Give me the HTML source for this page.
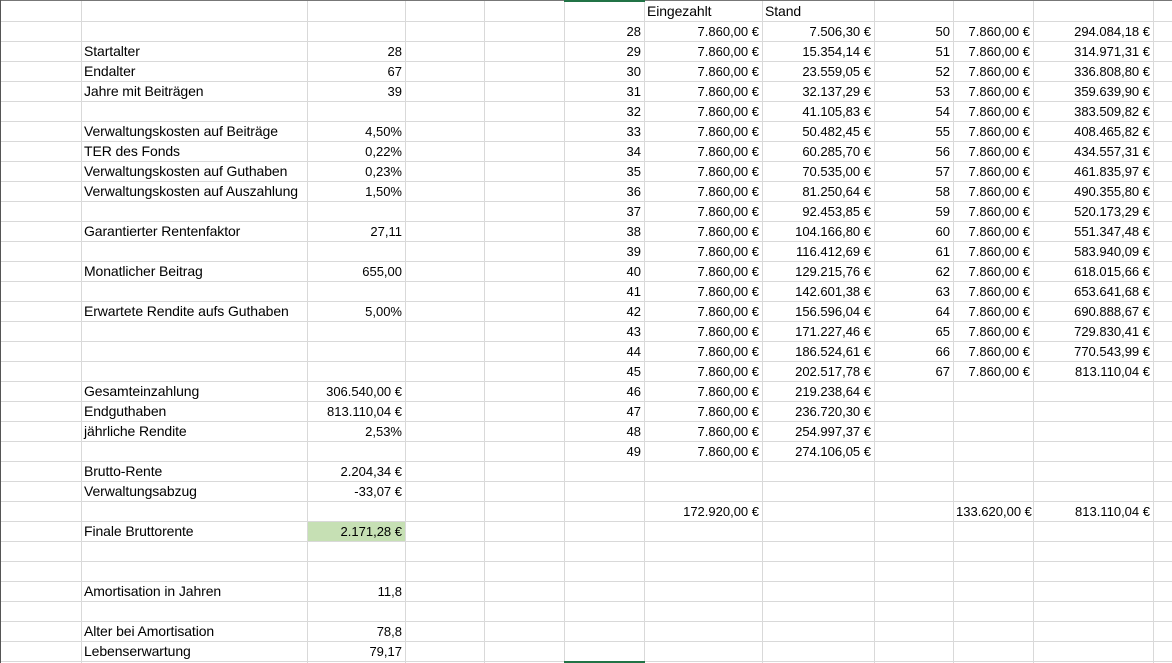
<!DOCTYPE html>
<html><head><meta charset="utf-8"><style>
body{margin:0;width:1172px;height:663px;overflow:hidden;background:#fff;position:relative;font-family:"Liberation Sans",Carlito,sans-serif;font-size:13px;color:#000}
.h{position:absolute;left:0;width:1172px;height:1px;background:#d9d9d9}
.v{position:absolute;top:0;height:663px;width:1px;background:#d9d9d9}
.c{position:absolute;height:20px;line-height:21px;white-space:nowrap;box-sizing:border-box;padding:0 3px}
.r{text-align:right}
.l{font-size:14px;letter-spacing:-0.1px}
</style></head><body>
<div style="position:absolute;left:307px;top:521px;width:98px;height:20px;background:#c6e0b4"></div>
<div class="h" style="top:21px"></div><div class="h" style="top:41px"></div><div class="h" style="top:61px"></div><div class="h" style="top:81px"></div><div class="h" style="top:101px"></div><div class="h" style="top:121px"></div><div class="h" style="top:141px"></div><div class="h" style="top:161px"></div><div class="h" style="top:181px"></div><div class="h" style="top:201px"></div><div class="h" style="top:221px"></div><div class="h" style="top:241px"></div><div class="h" style="top:261px"></div><div class="h" style="top:281px"></div><div class="h" style="top:301px"></div><div class="h" style="top:321px"></div><div class="h" style="top:341px"></div><div class="h" style="top:361px"></div><div class="h" style="top:381px"></div><div class="h" style="top:401px"></div><div class="h" style="top:421px"></div><div class="h" style="top:441px"></div><div class="h" style="top:461px"></div><div class="h" style="top:481px"></div><div class="h" style="top:501px"></div><div class="h" style="top:521px"></div><div class="h" style="top:541px"></div><div class="h" style="top:561px"></div><div class="h" style="top:581px"></div><div class="h" style="top:601px"></div><div class="h" style="top:621px"></div><div class="h" style="top:641px"></div><div class="h" style="top:661px"></div>
<div class="v" style="left:81px"></div><div class="v" style="left:307px"></div><div class="v" style="left:405px"></div><div class="v" style="left:484px"></div><div class="v" style="left:564px"></div><div class="v" style="left:644px"></div><div class="v" style="left:762px"></div><div class="v" style="left:874px"></div><div class="v" style="left:953px"></div><div class="v" style="left:1033px"></div><div class="v" style="left:1153px"></div>
<div style="position:absolute;left:0;top:0;width:1172px;height:1px;background:#777"></div>
<div style="position:absolute;left:0;top:0;width:1px;height:663px;background:#555"></div>
<div style="position:absolute;left:564px;top:0;width:81px;height:2px;background:#217346"></div>
<div style="position:absolute;left:564px;top:661px;width:81px;height:2px;background:#217346"></div>

<div class="c l" style="left:81px;top:41px">Startalter</div>
<div class="c l" style="left:81px;top:61px">Endalter</div>
<div class="c l" style="left:81px;top:81px">Jahre mit Beiträgen</div>
<div class="c l" style="left:81px;top:121px">Verwaltungskosten auf Beiträge</div>
<div class="c l" style="left:81px;top:141px">TER des Fonds</div>
<div class="c l" style="left:81px;top:161px">Verwaltungskosten auf Guthaben</div>
<div class="c l" style="left:81px;top:181px">Verwaltungskosten auf Auszahlung</div>
<div class="c l" style="left:81px;top:221px">Garantierter Rentenfaktor</div>
<div class="c l" style="left:81px;top:261px">Monatlicher Beitrag</div>
<div class="c l" style="left:81px;top:301px">Erwartete Rendite aufs Guthaben</div>
<div class="c l" style="left:81px;top:381px">Gesamteinzahlung</div>
<div class="c l" style="left:81px;top:401px">Endguthaben</div>
<div class="c l" style="left:81px;top:421px">jährliche Rendite</div>
<div class="c l" style="left:81px;top:461px">Brutto-Rente</div>
<div class="c l" style="left:81px;top:481px">Verwaltungsabzug</div>
<div class="c l" style="left:81px;top:521px">Finale Bruttorente</div>
<div class="c l" style="left:81px;top:581px">Amortisation in Jahren</div>
<div class="c l" style="left:81px;top:621px">Alter bei Amortisation</div>
<div class="c l" style="left:81px;top:641px">Lebenserwartung</div>
<div class="c r" style="left:307px;width:98px;top:41px">28</div>
<div class="c r" style="left:307px;width:98px;top:61px">67</div>
<div class="c r" style="left:307px;width:98px;top:81px">39</div>
<div class="c r" style="left:307px;width:98px;top:121px">4,50%</div>
<div class="c r" style="left:307px;width:98px;top:141px">0,22%</div>
<div class="c r" style="left:307px;width:98px;top:161px">0,23%</div>
<div class="c r" style="left:307px;width:98px;top:181px">1,50%</div>
<div class="c r" style="left:307px;width:98px;top:221px">27,11</div>
<div class="c r" style="left:307px;width:98px;top:261px">655,00</div>
<div class="c r" style="left:307px;width:98px;top:301px">5,00%</div>
<div class="c r" style="left:307px;width:98px;top:381px">306.540,00 €</div>
<div class="c r" style="left:307px;width:98px;top:401px">813.110,04 €</div>
<div class="c r" style="left:307px;width:98px;top:421px">2,53%</div>
<div class="c r" style="left:307px;width:98px;top:461px">2.204,34 €</div>
<div class="c r" style="left:307px;width:98px;top:481px">-33,07 €</div>
<div class="c r" style="left:307px;width:98px;top:521px">2.171,28 €</div>
<div class="c r" style="left:307px;width:98px;top:581px">11,8</div>
<div class="c r" style="left:307px;width:98px;top:621px">78,8</div>
<div class="c r" style="left:307px;width:98px;top:641px">79,17</div>

<div class="c l" style="left:644px;top:1px">Eingezahlt</div>
<div class="c l" style="left:762px;top:1px">Stand</div>

<div class="c r" style="left:564px;width:80px;top:21px">28</div><div class="c r" style="left:644px;width:118px;top:21px">7.860,00 €</div><div class="c r" style="left:762px;width:112px;top:21px">7.506,30 €</div>
<div class="c r" style="left:564px;width:80px;top:41px">29</div><div class="c r" style="left:644px;width:118px;top:41px">7.860,00 €</div><div class="c r" style="left:762px;width:112px;top:41px">15.354,14 €</div>
<div class="c r" style="left:564px;width:80px;top:61px">30</div><div class="c r" style="left:644px;width:118px;top:61px">7.860,00 €</div><div class="c r" style="left:762px;width:112px;top:61px">23.559,05 €</div>
<div class="c r" style="left:564px;width:80px;top:81px">31</div><div class="c r" style="left:644px;width:118px;top:81px">7.860,00 €</div><div class="c r" style="left:762px;width:112px;top:81px">32.137,29 €</div>
<div class="c r" style="left:564px;width:80px;top:101px">32</div><div class="c r" style="left:644px;width:118px;top:101px">7.860,00 €</div><div class="c r" style="left:762px;width:112px;top:101px">41.105,83 €</div>
<div class="c r" style="left:564px;width:80px;top:121px">33</div><div class="c r" style="left:644px;width:118px;top:121px">7.860,00 €</div><div class="c r" style="left:762px;width:112px;top:121px">50.482,45 €</div>
<div class="c r" style="left:564px;width:80px;top:141px">34</div><div class="c r" style="left:644px;width:118px;top:141px">7.860,00 €</div><div class="c r" style="left:762px;width:112px;top:141px">60.285,70 €</div>
<div class="c r" style="left:564px;width:80px;top:161px">35</div><div class="c r" style="left:644px;width:118px;top:161px">7.860,00 €</div><div class="c r" style="left:762px;width:112px;top:161px">70.535,00 €</div>
<div class="c r" style="left:564px;width:80px;top:181px">36</div><div class="c r" style="left:644px;width:118px;top:181px">7.860,00 €</div><div class="c r" style="left:762px;width:112px;top:181px">81.250,64 €</div>
<div class="c r" style="left:564px;width:80px;top:201px">37</div><div class="c r" style="left:644px;width:118px;top:201px">7.860,00 €</div><div class="c r" style="left:762px;width:112px;top:201px">92.453,85 €</div>
<div class="c r" style="left:564px;width:80px;top:221px">38</div><div class="c r" style="left:644px;width:118px;top:221px">7.860,00 €</div><div class="c r" style="left:762px;width:112px;top:221px">104.166,80 €</div>
<div class="c r" style="left:564px;width:80px;top:241px">39</div><div class="c r" style="left:644px;width:118px;top:241px">7.860,00 €</div><div class="c r" style="left:762px;width:112px;top:241px">116.412,69 €</div>
<div class="c r" style="left:564px;width:80px;top:261px">40</div><div class="c r" style="left:644px;width:118px;top:261px">7.860,00 €</div><div class="c r" style="left:762px;width:112px;top:261px">129.215,76 €</div>
<div class="c r" style="left:564px;width:80px;top:281px">41</div><div class="c r" style="left:644px;width:118px;top:281px">7.860,00 €</div><div class="c r" style="left:762px;width:112px;top:281px">142.601,38 €</div>
<div class="c r" style="left:564px;width:80px;top:301px">42</div><div class="c r" style="left:644px;width:118px;top:301px">7.860,00 €</div><div class="c r" style="left:762px;width:112px;top:301px">156.596,04 €</div>
<div class="c r" style="left:564px;width:80px;top:321px">43</div><div class="c r" style="left:644px;width:118px;top:321px">7.860,00 €</div><div class="c r" style="left:762px;width:112px;top:321px">171.227,46 €</div>
<div class="c r" style="left:564px;width:80px;top:341px">44</div><div class="c r" style="left:644px;width:118px;top:341px">7.860,00 €</div><div class="c r" style="left:762px;width:112px;top:341px">186.524,61 €</div>
<div class="c r" style="left:564px;width:80px;top:361px">45</div><div class="c r" style="left:644px;width:118px;top:361px">7.860,00 €</div><div class="c r" style="left:762px;width:112px;top:361px">202.517,78 €</div>
<div class="c r" style="left:564px;width:80px;top:381px">46</div><div class="c r" style="left:644px;width:118px;top:381px">7.860,00 €</div><div class="c r" style="left:762px;width:112px;top:381px">219.238,64 €</div>
<div class="c r" style="left:564px;width:80px;top:401px">47</div><div class="c r" style="left:644px;width:118px;top:401px">7.860,00 €</div><div class="c r" style="left:762px;width:112px;top:401px">236.720,30 €</div>
<div class="c r" style="left:564px;width:80px;top:421px">48</div><div class="c r" style="left:644px;width:118px;top:421px">7.860,00 €</div><div class="c r" style="left:762px;width:112px;top:421px">254.997,37 €</div>
<div class="c r" style="left:564px;width:80px;top:441px">49</div><div class="c r" style="left:644px;width:118px;top:441px">7.860,00 €</div><div class="c r" style="left:762px;width:112px;top:441px">274.106,05 €</div>
<div class="c r" style="left:644px;width:118px;top:501px">172.920,00 €</div>

<div class="c r" style="left:874px;width:79px;top:21px">50</div><div class="c r" style="left:953px;width:80px;top:21px">7.860,00 €</div><div class="c r" style="left:1033px;width:120px;top:21px">294.084,18 €</div>
<div class="c r" style="left:874px;width:79px;top:41px">51</div><div class="c r" style="left:953px;width:80px;top:41px">7.860,00 €</div><div class="c r" style="left:1033px;width:120px;top:41px">314.971,31 €</div>
<div class="c r" style="left:874px;width:79px;top:61px">52</div><div class="c r" style="left:953px;width:80px;top:61px">7.860,00 €</div><div class="c r" style="left:1033px;width:120px;top:61px">336.808,80 €</div>
<div class="c r" style="left:874px;width:79px;top:81px">53</div><div class="c r" style="left:953px;width:80px;top:81px">7.860,00 €</div><div class="c r" style="left:1033px;width:120px;top:81px">359.639,90 €</div>
<div class="c r" style="left:874px;width:79px;top:101px">54</div><div class="c r" style="left:953px;width:80px;top:101px">7.860,00 €</div><div class="c r" style="left:1033px;width:120px;top:101px">383.509,82 €</div>
<div class="c r" style="left:874px;width:79px;top:121px">55</div><div class="c r" style="left:953px;width:80px;top:121px">7.860,00 €</div><div class="c r" style="left:1033px;width:120px;top:121px">408.465,82 €</div>
<div class="c r" style="left:874px;width:79px;top:141px">56</div><div class="c r" style="left:953px;width:80px;top:141px">7.860,00 €</div><div class="c r" style="left:1033px;width:120px;top:141px">434.557,31 €</div>
<div class="c r" style="left:874px;width:79px;top:161px">57</div><div class="c r" style="left:953px;width:80px;top:161px">7.860,00 €</div><div class="c r" style="left:1033px;width:120px;top:161px">461.835,97 €</div>
<div class="c r" style="left:874px;width:79px;top:181px">58</div><div class="c r" style="left:953px;width:80px;top:181px">7.860,00 €</div><div class="c r" style="left:1033px;width:120px;top:181px">490.355,80 €</div>
<div class="c r" style="left:874px;width:79px;top:201px">59</div><div class="c r" style="left:953px;width:80px;top:201px">7.860,00 €</div><div class="c r" style="left:1033px;width:120px;top:201px">520.173,29 €</div>
<div class="c r" style="left:874px;width:79px;top:221px">60</div><div class="c r" style="left:953px;width:80px;top:221px">7.860,00 €</div><div class="c r" style="left:1033px;width:120px;top:221px">551.347,48 €</div>
<div class="c r" style="left:874px;width:79px;top:241px">61</div><div class="c r" style="left:953px;width:80px;top:241px">7.860,00 €</div><div class="c r" style="left:1033px;width:120px;top:241px">583.940,09 €</div>
<div class="c r" style="left:874px;width:79px;top:261px">62</div><div class="c r" style="left:953px;width:80px;top:261px">7.860,00 €</div><div class="c r" style="left:1033px;width:120px;top:261px">618.015,66 €</div>
<div class="c r" style="left:874px;width:79px;top:281px">63</div><div class="c r" style="left:953px;width:80px;top:281px">7.860,00 €</div><div class="c r" style="left:1033px;width:120px;top:281px">653.641,68 €</div>
<div class="c r" style="left:874px;width:79px;top:301px">64</div><div class="c r" style="left:953px;width:80px;top:301px">7.860,00 €</div><div class="c r" style="left:1033px;width:120px;top:301px">690.888,67 €</div>
<div class="c r" style="left:874px;width:79px;top:321px">65</div><div class="c r" style="left:953px;width:80px;top:321px">7.860,00 €</div><div class="c r" style="left:1033px;width:120px;top:321px">729.830,41 €</div>
<div class="c r" style="left:874px;width:79px;top:341px">66</div><div class="c r" style="left:953px;width:80px;top:341px">7.860,00 €</div><div class="c r" style="left:1033px;width:120px;top:341px">770.543,99 €</div>
<div class="c r" style="left:874px;width:79px;top:361px">67</div><div class="c r" style="left:953px;width:80px;top:361px">7.860,00 €</div><div class="c r" style="left:1033px;width:120px;top:361px">813.110,04 €</div>
<div class="c r" style="left:953px;width:80px;top:501px">133.620,00 €</div>
<div class="c r" style="left:1033px;width:120px;top:501px">813.110,04 €</div>
</body></html>
